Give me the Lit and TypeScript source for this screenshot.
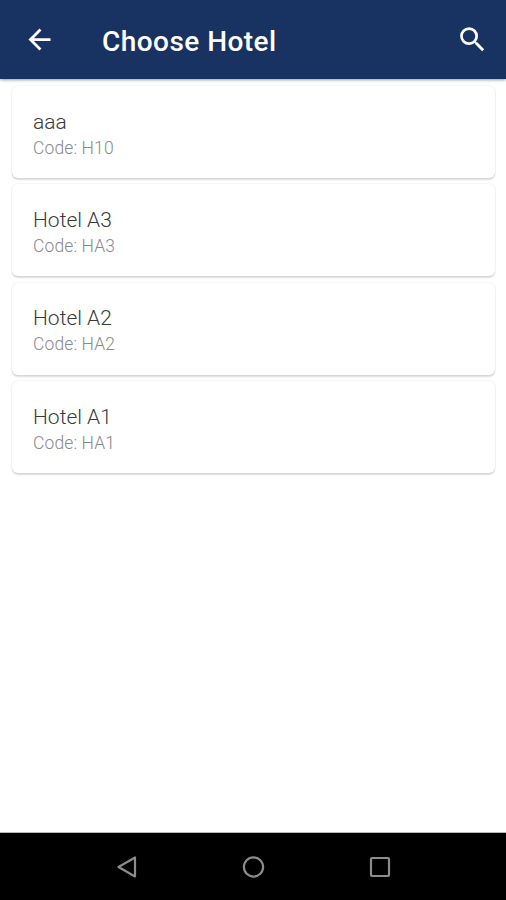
import { LitElement, html, css } from "lit";
import { customElement, property } from "lit/decorators.js";

@customElement("hotel-card")
class HotelCard extends LitElement {
  @property() name = "";
  @property() code = "";
  static styles = css`
    :host { display: block; height: 92px; box-sizing: border-box; padding: 23.6px 21px 0; background: #fff;
      border-radius: 6px; box-shadow: 0 1.5px 1.5px rgba(0,0,0,.13), 0 0 2px rgba(0,0,0,.12); }
    .name { font-size: 21px; line-height: 25px; font-weight: 300; color: #3a3a3a; }
    .code { font-size: 17.5px; line-height: 27px; font-weight: 300; color: #8a8a8a; letter-spacing: .12px; }
  `;
  render() {
    return html`<div class="name">${this.name}</div><div class="code">Code: ${this.code}</div>`;
  }
}

@customElement("app-root")
class AppRoot extends LitElement {
  static styles = css`
    :host { display: flex; flex-direction: column; height: 900px; background: #fff; font-family: Roboto, sans-serif; overflow: hidden; }
    .bar { height: 79px; flex: none; box-sizing: border-box; display: flex; align-items: center; padding: 0 17px 0 23px;
      background: #183362; color: #fff; box-shadow: 0 1px 3px rgba(0,0,0,.4); z-index: 1; }
    .title { flex: 1; margin: 4px 0 0 46px; font-size: 28px; font-weight: 500; line-height: 34px; letter-spacing: .45px; white-space: nowrap; }
    .icon { display: block; width: 33px; height: 33px; fill: currentColor; }
    .list { flex: 1; display: flex; flex-direction: column; gap: 6.4px; padding: 7px 11px 0 12px; }
    .nav { height: 68px; flex: none; box-sizing: border-box; border-top: 1px solid #b8b8b8; background: #000; display: flex; justify-content: center; align-items: center; gap: 102.5px; }
    .nav svg { display: block; width: 24px; height: 24px; fill: none; stroke: #8c8c8c; stroke-width: 2.2; }
  `;
  hotels = [["aaa", "H10"], ["Hotel A3", "HA3"], ["Hotel A2", "HA2"], ["Hotel A1", "HA1"]];
  render() {
    return html`
      <header class="bar">
        <svg class="icon" viewBox="0 0 24 24"><path d="M20 11H7.83l5.59-5.59L12 4l-8 8 8 8 1.41-1.41L7.83 13H20v-2z"/></svg>
        <div class="title">Choose Hotel</div>
        <svg class="icon" viewBox="0 0 24 24"><path d="M15.5 14h-.79l-.28-.27A6.471 6.471 0 0 0 16 9.5 6.5 6.5 0 1 0 9.5 16c1.61 0 3.09-.59 4.23-1.57l.27.28v.79l5 4.99L20.49 19l-4.99-5zm-6 0C7.01 14 5 11.99 5 9.5S7.01 5 9.5 5 14 7.01 14 9.5 11.99 14 9.5 14z"/></svg>
      </header>
      <main class="list">${this.hotels.map(([n, c]) => html`<hotel-card .name=${n} .code=${c}></hotel-card>`)}</main>
      <nav class="nav">
        <svg viewBox="0 0 24 24"><path d="M20 2.5v19L3.5 12z" stroke-linejoin="round"/></svg>
        <svg viewBox="0 0 24 24"><circle cx="12.5" cy="12" r="9.6"/></svg>
        <svg viewBox="0 0 24 24"><rect x="3" y="3" width="18" height="18" rx="1"/></svg>
      </nav>`;
  }
}
